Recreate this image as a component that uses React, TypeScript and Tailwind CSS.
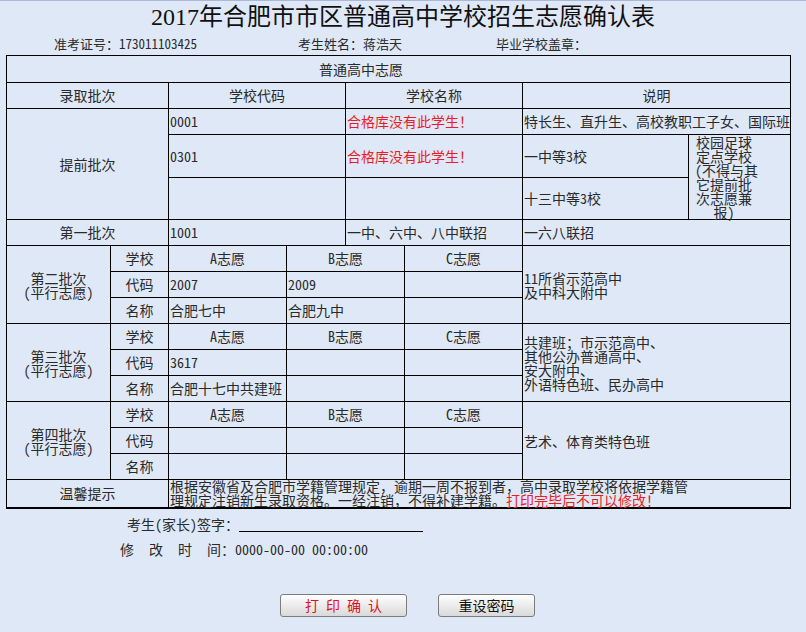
const cell = 'border border-black p-0'
const center = `${cell} text-center`
const left = `${cell} text-left pl-[1px]`
const red = 'text-[#ec1c24]'

function Batch({ title, codes, names, note }: { title: string; codes: string[]; names: string[]; note: React.ReactNode }) {
  return (
    <>
      <tr className="h-[26px]">
        <td rowSpan={3} className={`${center} leading-[14px]`}>
          {title}
          <br />
          (平行志愿)
        </td>
        <td className={center}>学校</td>
        <td className={center}>A志愿</td>
        <td colSpan={2} className={center}>B志愿</td>
        <td className={center}>C志愿</td>
        <td colSpan={2} rowSpan={3} className={`${left} leading-[14px]`}>
          {note}
        </td>
      </tr>
      <tr className="h-[26px]">
        <td className={center}>代码</td>
        <td className={left}>{codes[0]}</td>
        <td colSpan={2} className={left}>{codes[1]}</td>
        <td className={left}>{codes[2]}</td>
      </tr>
      <tr className="h-[26px]">
        <td className={center}>名称</td>
        <td className={left}>{names[0]}</td>
        <td colSpan={2} className={left}>{names[1]}</td>
        <td className={left}>{names[2]}</td>
      </tr>
    </>
  )
}

export default function App() {
  return (
    <div className="w-[806px] h-[632px] overflow-hidden bg-[#dfe8f6] border-t border-[#aab7d6] text-[14px] text-[#2a2a2a] font-['Noto_Sans_Mono_CJK_SC','Noto_Sans_CJK_SC',sans-serif]">
      {/* 标题 */}
      <div className="h-[32px] flex items-center justify-center text-[24px] text-[#111] font-['Liberation_Serif','Noto_Sans_CJK_SC',serif]">
        2017年合肥市市区普通高中学校招生志愿确认表
      </div>
      <div className="h-[22px] flex items-center pl-[54px] text-[13px]">
        <span className="w-[244px]">准考证号：173011103425</span>
        <span className="w-[198px]">考生姓名：蒋浩天</span>
        <span>毕业学校盖章：</span>
      </div>

      {/* 志愿表 */}
      <table className="ml-[6px] w-[784px] table-fixed border-b-2 border-black">
        <colgroup>
          <col className="w-[104px]" />
          <col className="w-[58px]" />
          <col className="w-[118px]" />
          <col className="w-[59px]" />
          <col className="w-[59px]" />
          <col className="w-[118px]" />
          <col className="w-[166px]" />
          <col className="w-[102px]" />
        </colgroup>
        <tbody>
          <tr className="h-[27px]">
            <td colSpan={8} className={`${cell} pl-[312px]`}>普通高中志愿</td>
          </tr>
          <tr className="h-[26px]">
            <td colSpan={2} className={center}>录取批次</td>
            <td colSpan={2} className={center}>学校代码</td>
            <td colSpan={2} className={center}>学校名称</td>
            <td colSpan={2} className={center}>说明</td>
          </tr>
          <tr className="h-[26px]">
            <td colSpan={2} rowSpan={3} className={center}>提前批次</td>
            <td colSpan={2} className={left}>0001</td>
            <td colSpan={2} className={`${left} ${red}`}>合格库没有此学生！</td>
            <td colSpan={2} className={`${left} whitespace-nowrap overflow-hidden`}>特长生、直升生、高校教职工子女、国际班</td>
          </tr>
          <tr className="h-[43px]">
            <td colSpan={2} className={left}>0301</td>
            <td colSpan={2} className={`${left} ${red}`}>合格库没有此学生！</td>
            <td className={left}>一中等3校</td>
            <td rowSpan={2} className={`${cell} pl-[6px]`}>
              <div className="w-[58px] text-center leading-[14px] whitespace-nowrap">
                校园足球
                <br />
                定点学校
                <br />
                (不得与其
                <br />
                它提前批
                <br />
                次志愿兼
                <br />
                报)
              </div>
            </td>
          </tr>
          <tr className="h-[42px]">
            <td colSpan={2} className={left}></td>
            <td colSpan={2} className={left}></td>
            <td className={left}>十三中等3校</td>
          </tr>
          <tr className="h-[26px]">
            <td colSpan={2} className={center}>第一批次</td>
            <td colSpan={2} className={left}>1001</td>
            <td colSpan={2} className={left}>一中、六中、八中联招</td>
            <td colSpan={2} className={left}>一六八联招</td>
          </tr>
          <Batch
            title="第二批次"
            codes={['2007', '2009', '']}
            names={['合肥七中', '合肥九中', '']}
            note={
              <>
                11所省示范高中
                <br />
                及中科大附中
              </>
            }
          />
          <Batch
            title="第三批次"
            codes={['3617', '', '']}
            names={['合肥十七中共建班', '', '']}
            note={
              <>
                共建班；市示范高中、
                <br />
                其他公办普通高中、
                <br />
                安大附中、
                <br />
                外语特色班、民办高中
              </>
            }
          />
          <Batch title="第四批次" codes={['', '', '']} names={['', '', '']} note="艺术、体育类特色班" />
          <tr className="h-[28px]">
            <td colSpan={2} className={`${center} border-b-2`}>温馨提示</td>
            <td colSpan={6} className={`${left} border-b-2 leading-[13.5px] whitespace-nowrap`}>
              根据安徽省及合肥市学籍管理规定，逾期一周不报到者，高中录取学校将依据学籍管
              <br />
              理规定注销新生录取资格。一经注销，不得补建学籍。<span className={red}>打印完毕后不可以修改！</span>
            </td>
          </tr>
        </tbody>
      </table>

      {/* 签字 */}
      <div className="mt-[4px] pl-[127px] h-[22px] flex items-center">
        <span>考生(家长)签字：</span>
        <span className="inline-block w-[184px] h-[16px] border-b border-black"></span>
      </div>
      <div className="mt-[5px] pl-[120px] h-[18px] flex items-center">
        <span className="tracking-[15px]">修改时</span>
        <span>间：0000-00-00 00:00:00</span>
      </div>

      <div className="mt-[36px] pl-[280px] flex gap-[31px]">
        <button className="w-[127px] h-[23px] rounded-[3px] border border-[#7c7c7c] bg-linear-to-b from-[#fefefe] to-[#d9d9d9] text-[14px] text-[#e0101c] tracking-[7px] pl-[7px]">
          打印确认
        </button>
        <button className="w-[97px] h-[23px] rounded-[3px] border border-[#7c7c7c] bg-linear-to-b from-[#fefefe] to-[#d9d9d9] text-[14px] text-[#111]">
          重设密码
        </button>
      </div>
    </div>
  )
}
